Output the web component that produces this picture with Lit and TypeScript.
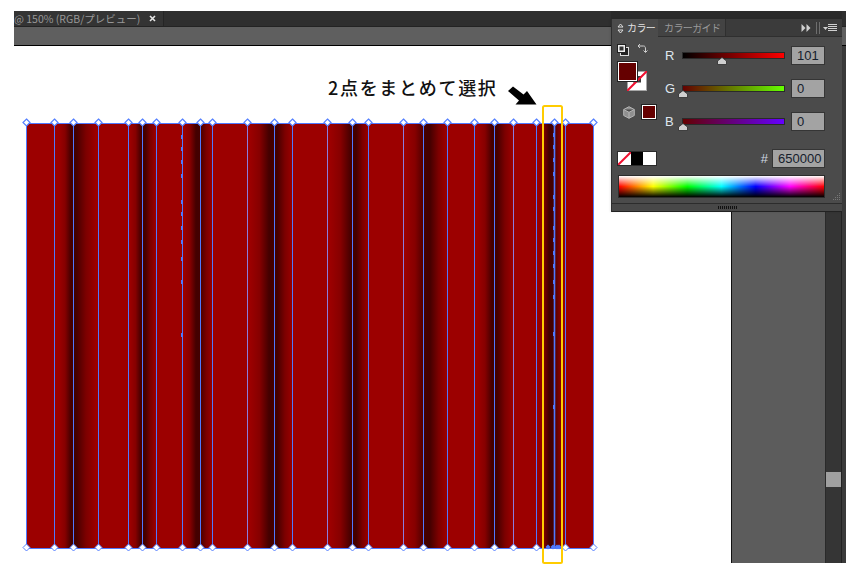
import { LitElement, html, css, svg } from "lit";
import { customElement } from "lit/decorators.js";

const RED = "#9c0000";
const DARK = "#440000";
const LEFT = 26;
const RIGHT = 593;
const TOP = 123;
const BOTTOM = 548;
const LINES = [26, 54, 73, 98, 128, 142, 156, 182, 200, 212, 247, 274, 292, 327, 352, 368, 403, 423, 447, 474, 494, 513, 536, 554, 565, 593];
const PALE = new Set([247, 327, 403, 513]);
// start of shade, dark plateau from, dark plateau to, end of shade
const SHADES: [number, number, number, number][] = [
  [59, 71, 76, 96],
  [130, 141, 145, 156],
  [184, 196, 200, 213],
  [250, 269, 277, 293],
  [330, 351, 356, 369],
  [405, 425, 430, 447],
  [478, 492, 497, 513],
  [538, 549, 553, 565],
];
const NOTCH_A = [135, 147, 160, 174, 200, 212, 226, 240, 257, 280, 333];
const NOTCH_B = [133, 145, 158, 172, 195, 207, 226, 238, 251, 264, 280, 295, 332, 405];
const EXTRA_DOTS = [548, 553, 557, 559];

function diamond(x: number, y: number, bottom: boolean) {
  const r = 3.5;
  return svg`<path d="M${x} ${y - r}L${x + r} ${y}L${x} ${y + r}L${x - r} ${y}Z" fill="#fff" stroke="#5580ff" stroke-width="${bottom ? 1 : 1.2}"/>`;
}

@customElement("color-panel")
class ColorPanel extends LitElement {
  static styles = css`
    :host { display: flex; flex-direction: column; width: 231px; height: 193px; background: #4b4b4b; font-family: "Noto Sans CJK JP", "Liberation Sans", sans-serif; box-sizing: border-box; border-left: 1px solid #2e2e2e; box-shadow: -1px 0 2px rgba(0,0,0,.08); }
    .tabs { display: flex; height: 18px; background: #3b3b3b; border-bottom: 1px solid #2f2f2f; align-items: stretch; box-sizing: border-box; }
    .tab { display: flex; align-items: center; font-size: 10px; letter-spacing: -.6px; line-height: 1; white-space: nowrap; }
    .tab.on { width: 46px; background: #4b4b4b; color: #e2e2e2; padding-left: 5px; gap: 3px; box-sizing: border-box; margin-bottom: -1px; }
    .tab.off { width: 68px; color: #9a9a9a; padding-left: 6px; box-sizing: border-box; background: #434343; border-right: 1px solid #2f2f2f; }
    .tabtools { margin-left: auto; display: flex; align-items: center; padding-right: 4px; }
    .main { display: flex; padding: 9px 0 0 5px; }
    .left { position: relative; width: 48px; height: 85px; flex: none; }
    .rows { display: flex; flex-direction: column; gap: 14px; }
    .row { display: flex; align-items: center; height: 19px; }
    .lbl { width: 17px; font: 13px "Liberation Sans", sans-serif; color: #dfe6ee; }
    .track { position: relative; width: 103px; height: 7px; border: 1px solid #2a2a2a; box-sizing: border-box; }
    .track.r { background: linear-gradient(to right, #000, #f00); }
    .track.g { background: linear-gradient(to right, #650000, #65ff00); }
    .track.b { background: linear-gradient(to right, #650000, #6500ff); }
    .thumb { position: absolute; top: 4px; width: 10px; height: 8px; transform: translateX(-50%); }
    .num { margin-left: 6px; width: 34px; height: 19px; box-sizing: border-box; background: #a3a3a3; border: 1px solid #353535; color: #15202c; font: 13px "Liberation Sans", sans-serif; line-height: 18px; padding-left: 5px; }
    .big { position: absolute; box-sizing: border-box; left: 1px; top: 16px; width: 19px; height: 19px; background: #650000; border: 1px solid #fff; outline: 1px solid #222; z-index: 2; }
    .stroke { position: absolute; left: 10px; top: 25px; width: 20px; height: 20px; z-index: 1; }
    .defaults { position: absolute; left: 0; top: -2px; width: 12px; height: 12px; }
    .swap { position: absolute; left: 20px; top: -3px; width: 11px; height: 11px; }
    .cube { position: absolute; left: 6px; top: 60px; width: 12px; height: 13px; }
    .small { position: absolute; box-sizing: border-box; left: 25px; top: 59px; width: 14px; height: 14px; background: #650000; border: 1px solid #fff; outline: 1px solid #222; }
    .mid { display: flex; align-items: center; justify-content: space-between; margin: 18px 17px 0 5px; height: 19px; }
    .swatches { display: flex; border: 1px solid #2a2a2a; }
    .sw { width: 12.67px; height: 13px; }
    .sw.k { background: #000; } .sw.w { background: #fff; }
    .sw svg { display: block; }
    .hexwrap { display: flex; align-items: center; }
    .hash { font: 13px "Liberation Sans", sans-serif; color: #cfd8e2; margin-right: 4px; }
    .hex { width: 53px; height: 19px; box-sizing: border-box; background: #a3a3a3; border: 1px solid #353535; color: #15202c; font: 13px "Liberation Sans", sans-serif; line-height: 18px; padding-left: 5px; }
    .spectrum { margin: 7px 17px 0 6px; height: 23px; box-sizing: border-box; border: 1px solid #2c2c2c; background: linear-gradient(to bottom, #fff 0, rgba(255,255,255,0) 50%, rgba(0,0,0,0) 50%, #000 100%), linear-gradient(to right, #f00, #ff0, #0f0, #0ff, #00f, #f0f, #f00); }
    .foot { margin-top: auto; height: 7px; border-top: 1px solid #2c2c2c; background: #484848; border-bottom: 1px solid #222; display: flex; justify-content: center; align-items: center; position: relative; }
    .grip { width: 19px; height: 3px; background: repeating-linear-gradient(to right, #111 0 1px, transparent 1px 2px); }
    .corner { position: absolute; right: 1px; bottom: 8px; width: 10px; height: 10px; }
  `;

  private thumb(pos: number) {
    return html`<svg class="thumb" style="left:${pos}px" viewBox="0 0 10 8"><path d="M5 .5L9.500 4V7.500H.5V4Z" fill="#cfcfcf" stroke="#2b2b2b" stroke-width=".8"/></svg>`;
  }

  private slider(label: string, cls: string, pos: number, value: string) {
    return html`<div class="row"><span class="lbl">${label}</span><div class="track ${cls}">${this.thumb(pos)}</div><div class="num">${value}</div></div>`;
  }

  render() {
    return html`
      <div class="tabs">
        <div class="tab on">
          <svg width="7" height="11" viewBox="0 0 7 11"><path d="M3.500 1L6 4H1ZM3.500 10L1 7H6Z" fill="none" stroke="#ddd"/></svg>
          <span>カラー</span>
        </div>
        <div class="tab off">カラーガイド</div>
        <div class="tabtools">
          <svg width="38" height="12" viewBox="0 0 38 12">
            <path d="M1.500 2L5.500 6L1.500 10ZM6.500 2L10.500 6L6.500 10Z" fill="#d0d0d0"/>
            <path d="M16.500 0V12M19.500 0V12" stroke="#6e6e6e"/>
            <path d="M23 5H28L25.500 8Z" fill="#d0d0d0"/>
            <path d="M28 2.500H37M28 4.500H37M28 6.500H37M28 8.500H37" stroke="#d0d0d0"/>
          </svg>
        </div>
      </div>
      <div class="main">
        <div class="left">
          <svg class="defaults" viewBox="0 0 12 12"><rect x="3.500" y="3.500" width="8" height="8" fill="#222" stroke="#ddd"/><rect x=".5" y=".5" width="8" height="8" fill="#eee" stroke="#222"/><rect x="2.500" y="2.500" width="4" height="4" fill="#333"/></svg>
          <svg class="swap" viewBox="0 0 11 11"><path d="M1 3H6.500C8 3 8.500 4 8.500 6V9M1 3L3 1M1 3L3 5M8.500 9.500L6.500 7.500M8.500 9.500L10.500 7.500" fill="none" stroke="#cfcfcf"/></svg>
          <div class="big"></div>
          <svg class="stroke" viewBox="0 0 20 20"><rect width="20" height="20" fill="#fff"/><rect x=".5" y=".5" width="19" height="19" fill="none" stroke="#222" stroke-opacity=".4"/><rect x="6" y="5" width="8" height="6.500" fill="#3a3a3a"/><path d="M0 20L20 0" stroke="#f01030" stroke-width="2"/></svg>
          <svg class="cube" viewBox="0 0 12 13"><path d="M6 .7L11.300 3.500V9.500L6 12.300L.7 9.500V3.500ZM.7 3.500L6 6.300L11.300 3.500M6 6.300V12.300" fill="#8f8f8f" stroke="#b5b5b5"/></svg>
          <div class="small"></div>
        </div>
        <div class="rows">
          ${this.slider("R", "r", 39, "101")}
          ${this.slider("G", "g", -0.5, "0")}
          ${this.slider("B", "b", -0.5, "0")}
        </div>
      </div>
      <div class="mid">
        <div class="swatches">
          <div class="sw"><svg width="13" height="13"><rect width="13" height="13" fill="#fff"/><path d="M0 13L13 0" stroke="#f01030" stroke-width="2"/></svg></div>
          <div class="sw k"></div>
          <div class="sw w"></div>
        </div>
        <div class="hexwrap"><span class="hash">#</span><div class="hex">650000</div></div>
      </div>
      <div class="spectrum"></div>
      <div class="foot">
        <div class="grip"></div>
        <svg class="corner" viewBox="0 0 10 10" fill="#777"><rect x="8" y="0" width="1" height="1"/><rect x="6" y="2" width="1" height="1"/><rect x="8" y="2" width="1" height="1"/><rect x="4" y="4" width="1" height="1"/><rect x="6" y="4" width="1" height="1"/><rect x="8" y="4" width="1" height="1"/><rect x="2" y="6" width="1" height="1"/><rect x="4" y="6" width="1" height="1"/><rect x="6" y="6" width="1" height="1"/><rect x="8" y="6" width="1" height="1"/></svg>
      </div>
    `;
  }
}

@customElement("app-root")
class AppRoot extends LitElement {
  static styles = css`
    :host { display: block; position: relative; width: 859px; height: 576px; background: #fff; overflow: hidden; font-family: "Noto Sans CJK JP", "Liberation Sans", sans-serif; }
    .window { display: flex; flex-direction: column; margin: 0 13px 0 14px; padding-top: 11px; height: 552px; }
    .tabbar { display: flex; height: 16px; background: #2f2f2f; flex: none; border-bottom: 1px solid #232323; box-sizing: border-box; }
    .doc { width: 150px; display: flex; align-items: center; background: #343434; border-right: 1px solid #252525; color: #989898; font-size: 10.5px; white-space: nowrap; overflow: hidden; justify-content: space-between; padding-right: 7px; box-sizing: border-box; }
    .close { width: 7px; height: 7px; flex: none; }
    .toolbar { height: 18px; background: #5f5f5f; border-bottom: 1px solid #000; flex: none; }
    .body { flex: 1; display: flex; min-height: 0; }
    .canvas { width: 717px; background: #fff; flex: none; }
    .rail { width: 93px; background: #5c5c5c; border-left: 1px solid #111; flex: none; }
    .scroll { width: 16px; background: #353535; flex: none; position: relative; box-sizing: border-box; border-left: 1px solid #2a2a2a; }
    .scrollthumb { position: absolute; left: 0; width: 15px; top: 426px; height: 15px; background: #a0a0a0; }
    .edge { flex: 1; background: #3a3a3a; border-left: 1px solid #222; }
    .art { position: absolute; left: 0; top: 0; width: 859px; height: 576px; pointer-events: none; }
    .note { position: absolute; left: 328px; top: 75px; font-size: 18px; font-weight: 500; letter-spacing: 1.700px; line-height: 24px; color: #111; white-space: nowrap; }
    color-panel { position: absolute; left: 611px; top: 19px; }
    .paneltop { position: absolute; left: 611px; top: 11px; width: 231px; height: 8px; background: #2a2a2a; }
  `;

  render() {
    return html`
      <div class="window">
        <div class="tabbar">
          <div class="doc">
            <span>@ 150% (RGB/プレビュー)</span>
            <svg class="close" viewBox="0 0 7 7"><path d="M1 1L6 6M6 1L1 6" stroke="#e8e8e8" stroke-width="1.600"/></svg>
          </div>
        </div>
        <div class="toolbar"></div>
        <div class="body">
          <div class="canvas"></div>
          <div class="rail"></div>
          <div class="scroll"><div class="scrollthumb"></div></div>
          <div class="edge"></div>
        </div>
      </div>
      <svg class="art" viewBox="0 0 859 576">
        <defs>
          ${SHADES.map(([a, p, q, b], i) => {
            const w = b - a;
            const s = (x: number) => (x - a) / w;
            return svg`<linearGradient id="g${i}" gradientUnits="userSpaceOnUse" x1="${a}" x2="${b}" y1="0" y2="0">
              <stop offset="0" stop-color="${RED}"/>
              <stop offset="${s(a + (p - a) * 0.5)}" stop-color="#860000"/>
              <stop offset="${s(p)}" stop-color="${DARK}"/>
              <stop offset="${s(q)}" stop-color="${DARK}"/>
              <stop offset="${s(q + (b - q) * 0.5)}" stop-color="#7c0000"/>
              <stop offset="1" stop-color="${RED}"/>
            </linearGradient>`;
          })}
        </defs>
        <rect x="${LEFT}" y="${TOP}" width="${RIGHT - LEFT}" height="${BOTTOM - TOP}" fill="${RED}"/>
        ${SHADES.map(([a, , , b], i) => svg`<rect x="${a}" y="${TOP}" width="${b - a}" height="${BOTTOM - TOP}" fill="url(#g${i})"/>`)}
        ${LINES.map((x) => svg`<path d="M${x + 0.5} ${TOP}V${BOTTOM}" stroke="${PALE.has(x) ? "#8a7ce0" : "#4f78ff"}" stroke-width="1"/>`)}
        <path d="M554.500 ${TOP}V${BOTTOM}" stroke="#4f78ff" stroke-width="1.600"/>
        <path d="M${LEFT} ${TOP + 0.5}H${RIGHT + 1}M${LEFT} ${BOTTOM + 0.5}H${RIGHT + 1}" stroke="#4f78ff"/>
        ${NOTCH_A.map((y) => svg`<rect x="181" y="${y}" width="2" height="4" fill="#4f78ff"/>`)}
        ${NOTCH_B.map((y) => svg`<rect x="553" y="${y}" width="2" height="4" fill="#4f78ff"/>`)}
        ${LINES.map((x) => diamond(x + 0.5, TOP - 0.5, false))}
        ${LINES.filter((x) => x !== 554).map((x) => diamond(x + 0.5, BOTTOM - 0.5, true))}
        ${EXTRA_DOTS.map((x) => svg`<path d="M${x} 544.500L${x + 2.500} 547L${x} 549.500L${x - 2.500} 547Z" fill="#4f78ff"/>`)}
        <rect x="543" y="106" width="19" height="457" rx="1.500" fill="none" stroke="#ffcc00" stroke-width="2"/>
        <path d="M508 91L513 86.500L523.500 94.500L527 91L536.500 104.500L515.500 104.500L519 100.500Z" fill="#000"/>
      </svg>
      <div class="note">2点をまとめて選択</div>
      <div class="paneltop"></div>
      <color-panel></color-panel>
    `;
  }
}
